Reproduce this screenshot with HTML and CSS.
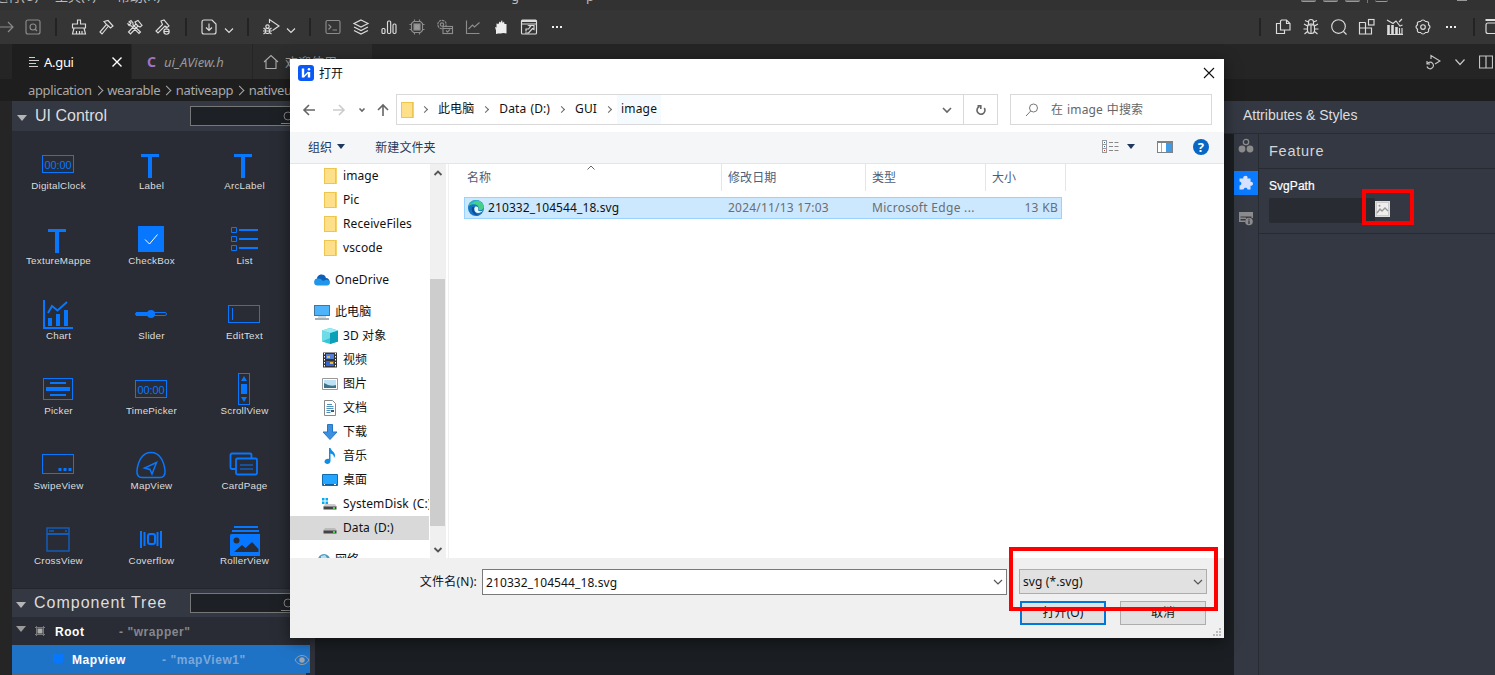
FILE: index.html
```html
<!DOCTYPE html>
<html lang="zh-CN">
<head>
<meta charset="utf-8">
<title>UI Editor</title>
<link rel="stylesheet" href="styles.css">
</head>
<body>
<div class="app">
  <div class="menubar">
    <span class="menu m1">运行(U)</span><span class="menu m2">工具(T)</span><span class="menu m3">帮助(H)</span>
    <span class="menu wintitle">g</span><span class="menu wintitle2">p</span>
    <span class="layouts"><i></i><i></i><i></i><b></b><i class="short"></i><em></em></span>
  </div>
  <div class="toolbar">
    <span class="tool first dim"><svg width="20" height="20" viewBox="0 0 20 20"><path d="M3 10h14M12 5l5 5-5 5"/></svg></span>
    <span class="tool dim"><svg width="20" height="20" viewBox="0 0 20 20"><rect x="3" y="3" width="14" height="14" rx="2"/><circle cx="10" cy="10" r="3"/><path d="M12 12l2 2"/></svg></span>
    <span class="sep"></span>
    <span class="tool"><svg width="20" height="20" viewBox="0 0 20 20"><path d="M8.500 7V3h3v4h5v4h-13V7zM5 11l-1.500 6h13L15 11M7.500 17v-3M10.500 17v-3M13 17v-3"/></svg></span>
    <span class="tool"><svg width="20" height="20" viewBox="0 0 20 20"><path d="M7 4.500l4-1 5 5.500-2.500 2-2-2L5 17l-2-2 6.500-7.500zM9.500 7.500l2 1.500"/></svg></span>
    <span class="tool"><svg width="20" height="20" viewBox="0 0 20 20"><path d="M10 5l3-1.500 4 5-2 1.500-2-1-7.500 8-2-2 7.500-8zM4 5l2-1.500L8 6v2l7.500 7-1.500 1.500L6.500 9l-2.500-.5L3 7l2 .5 1-1.500zM11 7l2 2"/></svg></span>
    <span class="tool"><svg width="20" height="20" viewBox="0 0 20 20"><path d="M8 4l3-1 5 6-2 1.500-2-1.500L5 16l-2-2 6.500-6.500zM13 9v2"/><circle cx="13.500" cy="14.500" r="2.700"/><path d="M11 14.500h5"/></svg></span>
    <span class="sep"></span>
    <span class="tool"><svg width="20" height="20" viewBox="0 0 20 20"><path d="M5 3h8l4 4v8a2 2 0 0 1-2 2H5a2 2 0 0 1-2-2V5a2 2 0 0 1 2-2zM10 6.500v7M7 10.500l3 3 3-3"/></svg></span>
    <span class="caret"><svg width="12" height="12" viewBox="0 0 12 12"><path d="M2 4.500l4 4 4-4"/></svg></span>
    <span class="sep"></span>
    <span class="tool"><svg width="20" height="20" viewBox="0 0 20 20"><path d="M8.500 6V2.500L18 9l-6.500 4.500"/><circle cx="6.500" cy="9.500" r="1.700"/><rect x="4.500" y="11.500" width="4" height="5" rx="1.500"/><path d="M2.500 11l2 1.500M10.500 11l-2 1.500M2 14h9M2.500 17l2-1.500M10.500 17l-2-1.500"/></svg></span>
    <span class="caret"><svg width="12" height="12" viewBox="0 0 12 12"><path d="M2 4.500l4 4 4-4"/></svg></span>
    <span class="sep"></span>
    <span class="tool dim"><svg width="20" height="20" viewBox="0 0 20 20"><rect x="3" y="3.500" width="14" height="13" rx="1.500"/><path d="M5.500 7.500L8 10l-2.500 2.500M9.500 13H14"/></svg></span>
    <span class="tool"><svg width="20" height="20" viewBox="0 0 20 20"><path d="M10 3l7 3.500-7 3.500-7-3.500zM3 10l7 3.500 7-3.500M3 13.500L10 17l7-3.500"/></svg></span>
    <span class="tool"><svg width="20" height="20" viewBox="0 0 20 20"><rect x="3" y="11.500" width="3" height="5" rx="1"/><rect x="8.500" y="4" width="3.200" height="12.500" rx="1.200"/><rect x="14" y="7" width="3" height="9.500" rx="1.200"/></svg></span>
    <span class="tool dim"><svg width="20" height="20" viewBox="0 0 20 20"><path d="M6.500 4.500h7l2 2v7l-2 2h-7l-2-2v-7z"/><rect x="7" y="7" width="6" height="6" fill="#999"/><path d="M7.500 2.500v2M12.500 2.500v2M7.500 15.500v2M12.500 15.500v2M2.500 7.500h2M2.500 12.500h2M15.500 7.500h2M15.500 12.500h2"/></svg></span>
    <span class="tool dim"><svg width="20" height="20" viewBox="0 0 20 20"><circle cx="7" cy="7.500" r="4.200" stroke-dasharray="2.500 .7"/><circle cx="7" cy="7.500" r="1.700"/><rect x="8" y="9.500" width="9.500" height="7" fill="#353535"/><path d="M8 11.500h9.500M11 13.500l1.500 1.500 2.500-2.500"/></svg></span>
    <span class="tool dim"><svg width="20" height="20" viewBox="0 0 20 20"><path d="M3.500 3.500v13h13M5.500 12l4-4 2 2 5-4.500"/></svg></span>
    <span class="tool"><svg width="20" height="20" viewBox="0 0 20 20"><path class="solid" d="M5 17v-3.500L4 10l1.500.5V6.500L7.500 7l1-2.500 1 1L11 3l.7 3 1.300-1.500.5 2.500L15.500 7v9.500l-3-.5-3 .5H7z"/></svg></span>
    <span class="tool"><svg width="20" height="20" viewBox="0 0 20 20"><rect x="2.500" y="3" width="15" height="14" rx="1"/><path d="M3 4h14" stroke-width="2"/><path d="M3 7h14M7 14.500V12h2.500l2-2.500-1.500-1h5v4l-1.500-1-4 4.500H6"/></svg></span>
    <span class="tool"><svg width="20" height="20" viewBox="0 0 20 20"><path class="solid" d="M5 9h2v2H5zM9 9h2v2H9zM13 9h2v2h-2z"/></svg></span>
    <span class="push"></span>
    <span class="sep"></span>
    <span class="tool"><svg width="20" height="20" viewBox="0 0 20 20"><path d="M8.500 3h5l3.500 3.500V13H7.500V4zM13.500 3v3.500H17M7.500 6.500H3.500v10h8V13"/></svg></span>
    <span class="tool"><svg width="20" height="20" viewBox="0 0 20 20"><rect x="6.500" y="7" width="7" height="9.500" rx="3"/><path d="M7.500 7V5a2.500 2.500 0 0 1 5 0v2M6.500 8h7M10 8.500V16M3 7l3.500 2M17 7l-3.500 2M2.500 12h4M13.500 12h4M3.500 17l3-2.500M16.500 17l-3-2.500M4 3.500l3.500 1.500M16 3.500L12.500 5"/></svg></span>
    <span class="tool"><svg width="20" height="20" viewBox="0 0 20 20"><circle cx="9.500" cy="9.500" r="6.800"/><path d="M14.500 14.500l3 3"/></svg></span>
    <span class="tool"><svg width="20" height="20" viewBox="0 0 20 20"><path d="M8.500 5.500h-6v11.500h12v-6h-12M8.500 5.500V17"/><rect x="11.500" y="2.500" width="5.500" height="5.500"/></svg></span>
    <span class="tool"><svg width="20" height="20" viewBox="0 0 20 20"><path d="M3.500 8v9M7.500 8v9M11.500 10v7" stroke-width="2.600"/><path d="M14.500 11v6h2.500v-6M2 17.500h16M2 3l6 3.500L11 4l4 5 2.500-1M14 5l3-3"/></svg></span>
    <span class="tool"><svg width="20" height="20" viewBox="0 0 20 20"><path d="M7.500 4.500c1.500-2 3.500-2 5 0 2.500-.3 3.700 1.200 3 3.200 2 1.600 2 3 0 4.600.7 2-.5 3.500-3 3.200-1.500 2-3.500 2-5 0-2.500.3-3.700-1.200-3-3.200-2-1.600-2-3 0-4.600-.7-2 .5-3.500 3-3.200z"/><circle cx="10" cy="10" r="2.300"/></svg></span>
    <span class="tool"><svg width="20" height="20" viewBox="0 0 20 20"><path class="solid" d="M5 9h2v2H5zM9 9h2v2H9zM13 9h2v2h-2z"/></svg></span>
    <span class="sep"></span>
    <span class="tool edge"><svg width="20" height="20" viewBox="0 0 20 20"><path d="M2.500 3h16" stroke-width="2"/><rect x="3" y="6" width="15" height="10.500" rx="2"/></svg></span>
  </div>

  <div class="tabs">
    <div class="tab active"><svg class="lines" width="10" height="12" viewBox="0 0 10 12"><path d="M0 1.500h6M0 4.500h10M0 7.500h7M0 10.500h9"/></svg><span>A.gui</span><svg class="x" width="10" height="10" viewBox="0 0 10 10"><path d="M.5.5l9 9M9.500.5l-9 9"/></svg></div>
    <div class="tab"><b class="c">C</b><i>ui_AView.h</i></div>
    <div class="tab home"><svg width="16" height="16" viewBox="0 0 16 16"><path d="M1 8l7-6.500L15 8M3 6.500v8h10v-8"/></svg><span>欢迎使用</span></div>
    <div class="tabtools">
      <svg width="16" height="16" viewBox="0 0 16 16"><path d="M6 5V1.500l9 5.500-5 3M2 7v3h3M2.500 9.500a3.300 3.300 0 1 1-.5 3"/></svg>
      <svg width="12" height="12" viewBox="0 0 12 12"><path d="M1.500 3.500l4.500 5 4.500-5"/></svg>
      <svg width="14" height="14" viewBox="0 0 14 14"><path d="M.5 1h13v12H.5zM7 1v12"/></svg>
    </div>
  </div>
  <div class="crumbs"><span>application</span><u></u><span>wearable</span><u></u><span>nativeapp</span><u></u><span>nativeui</span></div>

  <div class="work">
    <aside class="left">
      <div class="head h1"><i class="tri"></i><span>UI Control</span><div class="search"><svg width="14" height="14" viewBox="0 0 14 14"><circle cx="7" cy="6" r="4"/><path d="M0 13.500h14"/></svg></div></div>
      <div class="grid">
        <div class="ctl"><svg viewBox="0 0 36 36"><rect x="2.500" y="9.500" width="31" height="17"/><text x="18" y="22.500" textLength="27">00:00</text></svg><span>DigitalClock</span></div>
        <div class="ctl"><svg viewBox="0 0 36 36"><path d="M8 9.500h18" stroke-width="3"/><path d="M17 9v23" stroke-width="4"/></svg><span>Label</span></div>
        <div class="ctl"><svg viewBox="0 0 36 36"><path d="M8 9.500h18" stroke-width="3"/><path d="M17 9v23" stroke-width="4"/></svg><span>ArcLabel</span></div>
        <div class="ctl"><svg viewBox="0 0 36 36"><path d="M8 9.500h18" stroke-width="3"/><path d="M17 9v23" stroke-width="4"/></svg><span>TextureMappe</span></div>
        <div class="ctl"><svg viewBox="0 0 36 36"><rect class="f" x="5" y="5" width="26" height="26"/><path class="w" d="M12 18.500l4.500 4.500 8-9.500"/></svg><span>CheckBox</span></div>
        <div class="ctl"><svg viewBox="0 0 36 36"><path d="M5.500 6.500h5v5h-5zM5.500 15.500h5v5h-5zM5.500 24.500h5v5h-5z"/><path d="M13 9h19M13 18h19M13 27h19" stroke-width="2"/></svg><span>List</span></div>
        <div class="ctl"><svg viewBox="0 0 36 36"><path d="M4 4v28h29" stroke-width="2"/><path d="M8 17l4-7 5.500 4.500L27 6" stroke-width="2"/><path d="M10 22v8M18 18v12M26 14v16" stroke-width="4"/></svg><span>Chart</span></div>
        <div class="ctl"><svg viewBox="0 0 36 36"><rect x="2.500" y="16.500" width="31" height="3" rx="1.500"/><path d="M3 18h15" stroke-width="4"/><circle class="f" cx="18" cy="18" r="4"/></svg><span>Slider</span></div>
        <div class="ctl"><svg viewBox="0 0 36 36"><rect x="2.500" y="9.500" width="31" height="17"/><path d="M6.500 12v12"/></svg><span>EditText</span></div>
        <div class="ctl"><svg viewBox="0 0 36 36"><rect x="3.500" y="7.500" width="29" height="21"/><path d="M10 12h16M10 24h16" stroke-width="2"/><path d="M6 18h24" stroke-width="4"/></svg><span>Picker</span></div>
        <div class="ctl"><svg viewBox="0 0 36 36"><rect x="2.500" y="9.500" width="31" height="17"/><text x="18" y="22.500" textLength="27">00:00</text></svg><span>TimePicker</span></div>
        <div class="ctl"><svg viewBox="0 0 36 36"><rect x="12.500" y="2.500" width="11" height="31"/><path class="f" d="M15 10h6l-3-5zM15 13h6v10h-6zM15 26h6l-3 5z"/></svg><span>ScrollView</span></div>
        <div class="ctl"><svg viewBox="0 0 36 36"><rect x="2.500" y="8.500" width="31" height="19"/><path d="M18.500 23.500h3M23.500 23.500h3M28.500 23.500h3" stroke-width="3"/></svg><span>SwipeView</span></div>
        <div class="ctl"><svg viewBox="0 0 36 36"><path d="M18 6.500c-9 0-13 9-14 18-.4 4.500 1.500 7 5 7h18c3.500 0 5.400-2.500 5-7-1-9-5-18-14-18z" stroke-width="1.500"/><path d="M23.500 16.500l-12 5.500 5.500 1.500 2 4.500z" stroke-width="1.500"/></svg><span>MapView</span></div>
        <div class="ctl"><svg viewBox="0 0 36 36"><path d="M10 23H6a1.500 1.500 0 0 1-1.500-1.500V9A1.500 1.500 0 0 1 6 7.500h18A1.500 1.500 0 0 1 25.500 9v3" stroke-width="1.800"/><rect x="10" y="12.500" width="21" height="16" rx="1.500" stroke-width="1.800"/><path d="M14 19h13M14 23h13"/></svg><span>CardPage</span></div>
        <div class="ctl"><svg class="soft" viewBox="0 0 36 36"><rect x="7" y="7" width="22" height="23" stroke-width="1.500"/><path d="M7 13h22" stroke-width="2"/><path d="M9 10h5M25 10h2" stroke-width="1.500"/></svg><span>CrossView</span></div>
        <div class="ctl"><svg viewBox="0 0 36 36"><path d="M8 10v17M28 10v17M11.500 11v14M24.500 11v14" stroke-width="2"/><rect x="15" y="13" width="7" height="10" rx="2" stroke-width="2"/></svg><span>Coverflow</span></div>
        <div class="ctl"><svg viewBox="0 0 36 36"><path d="M8 6h24M6 10h27" stroke-width="2"/><path class="f" d="M4 14.500q0-1.500 1.500-1.500H34v22H5.500Q4 35 4 33.500z"/><circle class="d" cx="10.500" cy="19.500" r="3"/><path class="d" d="M8 31l8-7 3.500 3 6.500-6 6.500 7v3z"/></svg><span>RollerView</span></div>
      </div>
      <div class="head h2"><i class="tri"></i><span>Component Tree</span><div class="search"><svg width="14" height="14" viewBox="0 0 14 14"><circle cx="7" cy="6" r="4"/><path d="M0 13.500h14"/></svg></div></div>
      <div class="node root"><i class="tri"></i><svg width="10" height="10" viewBox="0 0 10 10"><path d="M1.500 0v10M8.500 0v10M0 1.500h10M0 8.500h10"/><rect x="2.500" y="2.500" width="5" height="5" class="box"/></svg><b>Root</b><em>- "wrapper"</em></div>
      <div class="node sel"><svg width="12" height="12" viewBox="0 0 12 12"><path class="cube" d="M1 1h3l2 1 2-1h3v8l-5 2-5-2z"/></svg><b>Mapview</b><em>- "mapView1"</em><svg class="eye" width="16" height="12" viewBox="0 0 16 12"><path d="M1 6c3.500-6 10.500-6 14 0-3.500 6-10.500 6-14 0z"/><circle cx="8" cy="6" r="2.700"/></svg></div>
      <div class="hbar"></div>
    </aside>
    <div class="gutter"></div>
    <div class="canvas"></div>
    <aside class="right">
      <div class="rhead">Attributes &amp; Styles</div>
      <div class="rbody">
        <div class="void"></div>
        <div class="rail">
          <span><svg width="16" height="16" viewBox="0 0 16 16"><circle cx="8" cy="4" r="2.700" fill="none" stroke="#8b8b8b" stroke-width="1.300"/><circle cx="4" cy="11" r="3.400"/><circle cx="12" cy="11" r="3.400"/></svg></span>
          <span class="on"><svg width="16" height="16" viewBox="0 0 16 16"><path d="M1.500 3.500h3.700C4.500 1 8.500-.2 9.300 1.500c.5.800.2 1.500 0 2h3.200v3.300c3-.4 3.300 3.400.8 4l-.8-.1v3.800H9.500c0-2.300-3.500-2.600-4 0H1.500v-4c2.500-.5 2.500-3.500 0-4z"/></svg></span>
          <span><svg width="16" height="14" viewBox="0 0 16 14"><path d="M1 0h14v6h-1.500V4.500h-11v1H8V7H2.500v1.500H7V10H1z"/><circle cx="11" cy="9.500" r="3.800"/><path d="M11 8.500v3.500M11 6.700v1" stroke="#343842" stroke-width="1.300"/></svg></span>
        </div>
        <div class="props">
          <div class="feature">Feature</div>
          <div class="field"><label>SvgPath</label><div class="pick"><div class="inp"></div><svg width="15" height="16" viewBox="0 0 15 16"><path d="M0 0h15v16H0z" fill="#ddd"/><rect x="1.500" y="1.500" width="12" height="13" fill="#eee" stroke="#ccc"/><path d="M2 12l3-4 2 2 3-3 3 3" fill="none" stroke="#999" stroke-width="1.300"/><circle cx="4.500" cy="4.800" r="1" fill="#999"/></svg></div></div>
        </div>
      </div>
    </aside>
  </div>

  <div class="dialog">
    <div class="dtitle"><svg width="16" height="16" viewBox="0 0 16 16"><rect width="16" height="16" rx="3" fill="#0a59f7"/><path d="M5 3.500v9M11 7v5.500" fill="none" stroke="#fff" stroke-width="2.400"/><path d="M5.500 12L10.500 7" fill="none" stroke="#fff" stroke-width="1.400"/><circle cx="11" cy="4.200" r="1.300" fill="#fff"/></svg><span>打开</span><svg class="close" width="12" height="12" viewBox="0 0 12 12"><path d="M1 1l10 10M11 1L1 11" stroke="#111" stroke-width="1.100"/></svg></div>
    <div class="nav">
      <svg class="bk" width="14" height="14" viewBox="0 0 14 14"><path d="M13 7H2M7 2L2 7l5 5"/></svg>
      <svg class="fw" width="14" height="14" viewBox="0 0 14 14"><path d="M1 7h11M7 2l5 5-5 5"/></svg>
      <svg class="hs" width="8" height="8" viewBox="0 0 8 8"><path d="M1.500 2.500L4 5l2.500-2.500"/></svg>
      <svg class="up" width="14" height="14" viewBox="0 0 14 14"><path d="M7 13V2M2 7l5-5 5 5"/></svg>
      <div class="addr"><i class="folder"></i><s></s><span>此电脑</span><s></s><span class="data">Data (D:)</span><s></s><span>GUI</span><s></s><span class="cur">image</span><svg class="dd" width="10" height="8" viewBox="0 0 10 8"><path d="M1 2l4 4 4-4"/></svg><div class="refresh"><svg width="12" height="12" viewBox="0 0 12 12"><path d="M9.300 4A4 4 0 1 1 4.500 2.500M2.500 1.700h3.300v3.300"/></svg></div></div>
      <div class="find"><svg width="14" height="14" viewBox="0 0 14 14"><circle cx="8.500" cy="5" r="4"/><path d="M5.700 8L1 13"/></svg><span>在 image 中搜索</span></div>
    </div>
    <div class="cmd"><span>组织</span><i></i><span class="nf">新建文件夹</span>
      <svg class="vw" width="17" height="14" viewBox="0 0 17 14"><rect x=".5" y=".5" width="4" height="12" fill="#fff" stroke="#999"/><path d="M0 4.500h5M0 8.500h5" stroke="#999"/><path d="M7 2.500h4M12.500 2.500h4M7 6.500h4M12.500 6.500h4M7 10.500h4M12.500 10.500h4" stroke="#888"/><path d="M2 2.500h1M2 6.500h1" stroke="#369"/><path d="M2 10.500h1" stroke="#c33"/></svg><i class="vt"></i>
      <svg class="pv" width="16" height="12" viewBox="0 0 16 12"><rect x=".5" y=".5" width="15" height="11" fill="#fff" stroke="#7d8287"/><path d="M0 1h16" stroke="#7d8287" stroke-width="2"/><path d="M4.500 2v9" stroke="#aaa"/><rect x="9" y="2" width="6" height="9" fill="#3f9be6"/></svg>
      <b class="help">?</b></div>
    <div class="dbody">
      <div class="tree">
        <div class="row in"><i class="folder"></i><span>image</span></div>
        <div class="row in"><i class="folder"></i><span>Pic</span></div>
        <div class="row in"><i class="folder"></i><span>ReceiveFiles</span></div>
        <div class="row in"><i class="folder"></i><span>vscode</span></div>
        <div class="row top"><svg width="16" height="16" viewBox="0 0 16 16"><path d="M3 8a4.500 4.500 0 0 1 9-2 3.500 3.500 0 0 1 3.500 4L8 11z" fill="#0f5fb8"/><path d="M3.500 13.500a3.500 3.500 0 0 1 .3-7C6 6 8 7.500 9 9l3-1.200c5-.2 5.200 5.700 1 5.700z" fill="#1f96ea"/></svg><span>OneDrive</span></div>
        <div class="row top"><svg width="16" height="16" viewBox="0 0 16 16"><rect x=".5" y="1.500" width="15" height="10" fill="#4db4fb" stroke="#44759b"/><path d="M4 13h8" stroke="#a5b5bf"/><path d="M1 15h14" stroke="#8797a2" stroke-width="1.500"/></svg><span>此电脑</span></div>
        <div class="row in"><svg width="16" height="16" viewBox="0 0 16 16"><path d="M8 0l8 2.500v11L8 16l-8-2.500v-11z" fill="#35c4d8"/><path d="M8 5l8-2.500v11L8 16z" fill="#0b9fb8"/><path d="M0 2.500L8 0l8 2.500L8 5z" fill="#99ecf3"/><path d="M0 2.500L8 5v5L0 13.500z" fill="#6edbe7"/></svg><span>3D 对象</span></div>
        <div class="row in"><svg width="16" height="16" viewBox="0 0 16 16"><path d="M1 .5h14v15H1z" fill="#333"/><path d="M4 2h8v5H4z" fill="#547fd4"/><path d="M4 9h8v5H4z" fill="#3465cf"/><path d="M5 4h3v2H5zM8 10h3v2H8z" fill="#e8bd42"/><path d="M2.500 1v14M13.500 1v14" stroke="#fff" stroke-dasharray="1.500 1.500"/></svg><span>视频</span></div>
        <div class="row in"><svg width="16" height="16" viewBox="0 0 16 16"><path d="M.5 2.500h15v11H.5z" fill="#fff" stroke="#999"/><path d="M2 4h12v8H2z" fill="#bfe1f5"/><path d="M2 7q6 4 12 2v3H2z" fill="#3b7389"/></svg><span>图片</span></div>
        <div class="row in"><svg width="16" height="16" viewBox="0 0 16 16"><path d="M2.500.5h8l3 3v12h-11z" fill="#fff" stroke="#888"/><path d="M5 4.500h5M4.500 6.500h7M4.500 8.500h7M4.500 10.500h4M4.500 12.500h4" stroke="#4d90bd"/><path d="M9 10h3v2H9z" fill="#456"/></svg><span>文档</span></div>
        <div class="row in"><svg width="16" height="16" viewBox="0 0 16 16"><path d="M5.500.5h5V8H15l-7 7.500L1 8h4.500z" fill="#3b91df" stroke="#2677c2"/></svg><span>下载</span></div>
        <div class="row in"><svg width="16" height="16" viewBox="0 0 16 16"><path d="M7 0h1.500c.5 3 5 4 4.500 8l-1 2c0-3-1.500-4-3.500-4.500V13c0 4-6 3.500-6 .8C2.500 11.500 5 10.500 7 11z" fill="#0d8ee8"/></svg><span>音乐</span></div>
        <div class="row in"><svg width="16" height="16" viewBox="0 0 16 16"><path d="M.5 2.500h15v11H.5z" fill="#24a5ff" stroke="#126dae"/><path d="M1 12.500h14" stroke="#0761a3"/><path d="M2 12.500h1M12 12.500h2" stroke="#fff"/></svg><span>桌面</span></div>
        <div class="row in"><svg width="16" height="16" viewBox="0 0 16 16"><path d="M0 2h2.500v2.500H0zM3.500 2H6v2.500H3.500zM0 5.500h2.500V8H0zM3.500 5.500H6V8H3.500z" fill="#00adef"/><path d="M3 8h10l2 3H1z" fill="#ccc"/><path d="M1.500 10.500h13v3h-13z" fill="#444"/><path d="M11 12h2" stroke="#4dff4d" stroke-width="1.500"/></svg><span class="data">SystemDisk (C:)</span></div>
        <div class="row in act"><svg width="16" height="16" viewBox="0 0 16 16"><path d="M3 8h10l2 3H1z" fill="#bbb"/><path d="M1.500 10.500h13v3h-13z" fill="#444"/><path d="M11 12h2" stroke="#4dff4d" stroke-width="1.500"/></svg><span class="data">Data (D:)</span></div>
        <div class="row top"><svg width="16" height="16" viewBox="0 0 16 16"><circle cx="10" cy="8" r="6" fill="#4c9bbf"/><path d="M7 4l4-1 2 3-3 2-3-1z" fill="#b8dce9"/></svg><span>网络</span></div>
      </div>
      <div class="scroll"><svg width="10" height="8" viewBox="0 0 10 8"><path d="M1.500 6L5 2.500 8.500 6"/></svg><div class="thumb"></div><svg width="10" height="8" viewBox="0 0 10 8"><path d="M1.500 2L5 5.500 8.500 2"/></svg></div>
      <div class="files">
        <div class="cols"><span class="c1">名称<svg width="8" height="5" viewBox="0 0 8 5"><path d="M.5 4.500L4 1l3.500 3.500"/></svg></span><span class="c2">修改日期</span><span class="c3">类型</span><span class="c4">大小</span></div>
        <div class="file"><svg width="16" height="16" viewBox="0 0 16 16"><circle cx="8" cy="8" r="8" fill="#1474c4"/><path d="M.5 6C2-1.500 14-2 15.800 6.500c.5 3-2.800 4.500-5.300 3.500C12 5 6 2.500.5 6z" fill="#45cf8b"/><path d="M.5 6C2 0 9-1 11 .6 7 1 4 3 .5 6z" fill="#28afd4"/><path d="M6 8.500c.5-3 5-2.500 4.200.8C9.500 11 12 12 15 10.500 12.500 14 6 14 6 8.500z" fill="#eaf7ff"/><path d="M4 7c-1.500 5 3 9 7 8.300C7 14 5.500 11 6.500 7z" fill="#0c4b96"/></svg><span class="fn">210332_104544_18.svg</span><span class="fd">2024/11/13 17:03</span><span class="ft">Microsoft Edge ...</span><span class="fs">13 KB</span></div>
      </div>
    </div>
    <div class="foot">
      <div class="frow"><label>文件名(N):</label><div class="fname"><span>210332_104544_18.svg</span><svg width="10" height="8" viewBox="0 0 10 8"><path d="M1 2l4 4 4-4"/></svg></div><div class="type"><span>svg (*.svg)</span><svg width="10" height="8" viewBox="0 0 10 8"><path d="M1 2l4 4 4-4"/></svg></div></div>
      <div class="btns"><span class="btn ok">打开(O)</span><span class="btn">取消</span></div>
      <svg class="grip" width="8" height="8" viewBox="0 0 8 8"><path d="M6 0h2v2H6zM3 3h2v2H3zM6 3h2v2H6zM0 6h2v2H0zM3 6h2v2H3zM6 6h2v2H6z" fill="#bbb"/></svg>
    </div>
  </div>
  <div class="mark mark1"></div>
  <div class="mark mark2"></div>
</div>
</body>
</html>
```

FILE: styles.css
```css
* { box-sizing: border-box; }
body { margin: 0; overflow: hidden; background: #1b1e22; }
svg { display: block; flex: none; }
.app { position: relative; width: 1495px; height: 675px; overflow: hidden; display: flex; flex-direction: column; font-family: "Noto Sans", "Noto Sans CJK SC", sans-serif; font-size: 12px; white-space: nowrap; }

.menubar { height: 10px; flex: none; background: #323232; overflow: hidden; display: flex; color: #bbb; font-size: 13px; line-height: 16px; }
.menu { margin-top: -12px; flex: none; height: 16px; }
.m1 { width: 60px; margin-left: -5px; }
.m2 { width: 62px; }
.m3 { width: 394px; }
.wintitle { width: 75px; }
.wintitle2 { width: 20px; }
.layouts { margin-left: auto; width: 194px; display: flex; gap: 7px; }
.layouts i { width: 15px; height: 2px; border-bottom: 1px solid #999; background: #666; border-radius: 0 0 2px 2px; }
.layouts b { width: 1px; height: 3px; background: #777; }
.layouts .short { width: 13px; background: none; }
.layouts em { margin-left: 62px; width: 10px; height: 1px; background: #999; }

.toolbar { height: 34px; flex: none; background: #353535; display: flex; align-items: center; }
.tool { width: 28px; flex: none; display: flex; justify-content: center; }
.tool.first { margin-left: -8px; width: 27px; }
.tool.edge { width: 12px; justify-content: flex-start; }
.tool svg, .caret svg { fill: none; stroke: #dcdcdc; stroke-width: 1.15; }
.tool.dim svg { stroke: #8c8c8c; }
.tool .solid { fill: #eee; stroke: none; }
.caret { width: 16px; flex: none; padding-top: 5px; }
.sep { width: 18px; flex: none; height: 18px; background: linear-gradient(#232323, #232323) 50% 0 / 2px 18px no-repeat; }
.push { flex: 1; }

.tabs { height: 35px; flex: none; background: #252525; padding-left: 12px; display: flex; }
.tab { width: 120px; margin-right: 1px; background: #2d2d2d; display: flex; align-items: center; color: #999; font-size: 13px; letter-spacing: 0; }
.tab.active { width: 119px; background: #1e1e1e; color: #fff; padding-left: 17px; letter-spacing: -.3px; }
.tab.active span { margin-left: 5px; width: 68px; }
.tab svg { fill: none; stroke: #aaa; stroke-width: 1.1; }
.tab .lines { stroke: #ccc; }
.tab .x { stroke: #fff; stroke-width: 1.4; }
.tab .c { color: #a074c4; margin: 0 6px 0 15px; font-size: 14px; width: 11px; }
.tab.home { width: 119px; padding-left: 10px; }
.tab.home span { margin-left: 6px; }
.tabtools { margin-left: auto; display: flex; align-items: center; gap: 13px; width: 70px; }
.tabtools svg { fill: none; stroke: #c5c5c5; stroke-width: 1.2; }
.crumbs { height: 22px; flex: none; background: #1e1e1e; padding-left: 28px; display: flex; align-items: center; color: #a9a9a9; font-size: 13px; letter-spacing: -.35px; }
.crumbs u { width: 7px; height: 7px; border: solid #a9a9a9; border-width: 1px 1px 0 0; transform: rotate(45deg); margin: 0 5.500px 0 3px; }

.work { flex: 1; min-height: 0; display: flex; background: linear-gradient(90deg, #252525 12px, #1b1e22 12px); padding-left: 12px; }
.left { width: 298px; flex: none; background: #292c34; font-family: "Liberation Sans", sans-serif; color: #ddd; }
.gutter { width: 5px; background: #2e313a; }
.canvas { flex: 1; background: #1b1e22; }
.head { display: flex; align-items: center; background: #343842; padding-left: 5px; }
.head span { font-size: 16px; margin-left: 8px; width: 154px; }
.h1 { height: 30px; }
.h2 { height: 29px; border-top: 1px solid #24262d; padding-left: 4px; }
.h2 span { letter-spacing: 1px; width: 156px; }
.tri { border: 5px solid transparent; border-top: 6px solid #b5b5b5; border-bottom: 0; margin-top: 3px; flex: none; }
.search { width: 120px; height: 20px; flex: none; margin-left: 1px; border: 1px solid #777; background: #1d2024; padding: 3px 0 0 90px; }
.search svg { fill: none; stroke: #888; }
.grid { display: grid; grid-template-columns: repeat(3, 93px); grid-auto-rows: 75px; height: 457px; }
.ctl { display: flex; flex-direction: column; align-items: center; padding-top: 15px; font-size: 9.800px; }
.ctl svg { width: 36px; height: 36px; margin-right: 1px; fill: none; stroke: #0877ff; }
.ctl span { margin-top: -2px; line-height: 12px; letter-spacing: .25px; }
.ctl text { font-size: 11px; fill: #0877ff; stroke: none; text-anchor: middle; }
.ctl .f { fill: #0877ff; stroke: none; }
.ctl .d { fill: #292c34; stroke: none; }
.ctl .w { stroke: #fff; }
.ctl .soft { opacity: .65; }
.node { display: flex; align-items: center; height: 28px; font-size: 12px; letter-spacing: .55px; color: #fff; }
.node b, .node em, .eye { margin-top: 2px; }
.node em { font-style: normal; font-weight: bold; color: #85878c; }
.root { padding-left: 4px; }
.root .tri { margin: -4px 9px 0 0; border-top-color: #999; }
.root svg { fill: none; stroke: #777; }
.root .box { fill: #aaa; stroke: none; }
.root b { margin-left: 10px; width: 64px; }
.sel { background: #1f73c7; padding-left: 40px; }
.sel .cube { fill: #0578ff; }
.sel b { margin-left: 8px; width: 90px; }
.sel em { color: #79a8dc; width: 132px; }
.eye { fill: none; stroke: #8f9dab; }
.eye circle { fill: #9da5ad; stroke: none; }
.hbar { height: 2px; width: 294px; background: #606267; }

.right { width: 271px; flex: none; font-family: "Liberation Sans", sans-serif; display: flex; flex-direction: column; background: #343842; }
.rhead { height: 32px; padding: 5px 0 0 19px; font-size: 14px; line-height: 18px; color: #ddd; }
.rbody { flex: 1; display: flex; border-top: 1px solid #292b33; }
.void { width: 10px; background: #1b1e22; }
.rail { width: 25px; border-right: 1px solid #292b33; display: flex; flex-direction: column; gap: 12px; }
.rail span { width: 24px; height: 24px; display: flex; align-items: center; justify-content: center; }
.rail svg { fill: #8b8b8b; }
.rail .on { background: #0a7aff; margin-top: 1px; }
.rail .on svg { fill: #d6e2ff; }
.props { flex: 1; }
.feature { height: 35px; border-bottom: 1px solid #292b33; padding-left: 10px; line-height: 34px; font-size: 14.500px; letter-spacing: .75px; color: #d5d5d5; }
.field { height: 65px; border-bottom: 1px solid #292b33; padding: 10px 0 0 10px; color: #fff; }
.field label { display: block; height: 19px; line-height: 14px; letter-spacing: .05px; -webkit-text-stroke: .2px #fff; }
.pick { display: flex; }
.pick .inp { width: 106px; height: 25px; background: #292b33; border-radius: 2px; }
.pick svg { margin-top: 3px; }

.dialog { position: absolute; left: 290px; top: 59px; width: 934px; height: 579px; background: #fff; color: #111; box-shadow: 0 3px 14px rgba(0,0,0,.5); display: flex; flex-direction: column; letter-spacing: .1px; }
.data { word-spacing: 1px; }
.dtitle { height: 35px; padding: 0 9px 7px 8px; display: flex; align-items: center; }
.dtitle span { margin-left: 5px; }
.close { margin-left: auto; fill: none; }
.nav { height: 31px; display: flex; align-items: center; padding-left: 12px; }
.nav svg { fill: none; stroke: #666; stroke-width: 1.600; }
.nav .fw { margin-left: 16px; stroke: #ccc; }
.nav .hs { margin-left: 12px; }
.nav .up { margin-left: 10px; }
.addr { margin-left: 6px; width: 602px; height: 31px; border: 1px solid #d9d9d9; display: flex; align-items: center; padding-left: 4px; }
.addr > span { height: 29px; line-height: 28px; flex: none; }
.addr s { width: 5px; height: 5px; border: solid #666; border-width: 1.500px 1.500px 0 0; transform: rotate(45deg); margin: 0 11px 0 9px; flex: none; }
.addr .folder + s { margin-left: 7px; }
.addr .cur { background: #f5fafe; padding: 0 4px; margin-left: -5px; letter-spacing: .2px; }
.addr .dd { margin-left: auto; }
.refresh { margin-left: 11px; width: 34px; height: 29px; border-left: 1px solid #d9d9d9; display: flex; align-items: center; justify-content: center; }
.find { margin-left: 12px; width: 202px; height: 31px; border: 1px solid #d9d9d9; display: flex; align-items: center; padding-left: 14px; color: #666; }
.find svg { stroke-width: 1; stroke: #777; }
.find span { margin-left: 12px; word-spacing: .8px; margin-top: -1px; }
.folder { display: block; flex: none; width: 12px; height: 16px; background: #ffe08a; border: 1px solid #eec54f; box-shadow: 1px 0 0 #f5d26a; margin-right: 2px; }
.cmd { height: 32px; margin-top: 7px; background: #f5f6f7; border-bottom: 1px solid #e3e5e7; display: flex; align-items: center; padding: 0 15px 2px 18px; color: #1e395b; }
.cmd i { border: 4px solid transparent; border-top: 5px solid #1e395b; border-bottom: 0; margin-left: 5px; }
.cmd .nf { margin-left: 30px; }
.cmd .vw { margin-left: auto; }
.cmd .vt { margin-left: 8px; }
.cmd .pv { margin-left: 22px; }
.help { margin-left: 20px; width: 16px; height: 16px; border-radius: 50%; background: #0866c4; color: #fff; text-align: center; line-height: 16px; font-size: 13px; }
.dbody { height: 394px; flex: none; display: flex; overflow: hidden; }
.tree { width: 139px; overflow: hidden; margin-right: 1px; }
.row { height: 24px; display: flex; align-items: center; padding-left: 24px; }
.row span { margin: -2px 0 0 5px; }
.row.in { padding-left: 32px; }
.row .folder { margin: 0 2px 0 2px; }
.row.top { margin-top: 8px; }
.act { background: #d9d9d9; }
.scroll { width: 16px; background: #f0f0f0; display: flex; flex-direction: column; align-items: center; padding: 5px 1px 4px 0; }
.scroll svg { fill: none; stroke: #555; stroke-width: 1.800; }
.scroll .thumb { width: 15px; height: 247px; background: #cdcdcd; margin: 102px 0 20px; }
.files { flex: 1; margin-left: 2px; border-left: 1px solid #f0f0f0; padding-left: 15px; }
.cols { display: flex; height: 27px; line-height: 27px; color: #4c607a; }
.cols span { border-right: 1px solid #e5e5e5; padding-left: 6px; position: relative; }
.cols .c1 { width: 258px; padding-left: 3px; }
.c1 svg { position: absolute; left: 123px; top: 1px; fill: none; stroke: #666; }
.c2 { width: 144px; }
.c3 { width: 120px; }
.c4 { width: 80px; }
.file { margin-top: 6px; width: 598px; height: 22px; background: #cce8ff; border: 1px solid #99d1ff; display: flex; align-items: center; padding-left: 3px; color: #6d6d6d; }
.file span { margin-top: -2px; }
.file .fn { width: 244px; padding-left: 4px; color: #111; }
.fd { width: 144px; letter-spacing: .2px; }
.ft { width: 116px; letter-spacing: .3px; }
.fs { width: 70px; text-align: right; letter-spacing: .3px; }
.foot { height: 80px; flex: none; background: #f0f0f0; position: relative; padding-top: 11px; }
.frow { display: flex; }
.frow label { width: 187px; text-align: right; line-height: 26px; margin-right: 5px; letter-spacing: .25px; }
.fname { width: 525px; height: 26px; border: 1px solid #7a7a7a; background: #fff; }
.type { margin-left: 12px; width: 188px; height: 25px; border: 1px solid #adadad; background: #e1e1e1; }
.fname, .type { display: flex; align-items: center; justify-content: space-between; padding: 0 3px; }
.fname svg, .type svg { fill: none; stroke: #555; stroke-width: 1.200; }
.btns { display: flex; gap: 14px; margin: 6px 0 0 730px; }
.btn { width: 86px; height: 24px; border: 1px solid #adadad; background: #e1e1e1; text-align: center; line-height: 22px; }
.btn.ok { border: 2px solid #0078d7; line-height: 20px; }
.grip { position: absolute; right: 3px; bottom: 2px; }
.mark { position: absolute; border: 4px solid #f00; }
.mark1 { left: 1009px; top: 547px; width: 209px; height: 64px; }
.mark2 { left: 1362px; top: 189px; width: 52px; height: 36px; }
```
